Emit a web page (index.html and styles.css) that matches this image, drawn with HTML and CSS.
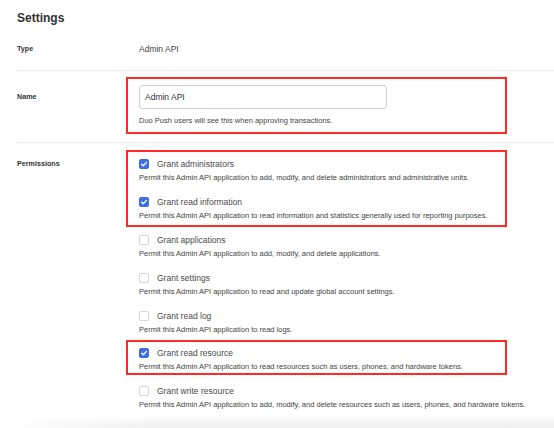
FILE: index.html
```html
<!DOCTYPE html>
<html>
<head>
<meta charset="utf-8">
<link rel="stylesheet" href="styles.css">
</head>
<body>
<div class="page">
  <h1 class="title">Settings</h1>

  <div class="row row-type">
    <div class="label">Type</div>
    <div class="value-text">Admin API</div>
  </div>

  <div class="row row-name">
    <div class="label label-name">Name</div>
    <div class="col">
      <div class="group hl group-name">
        <div class="input">Admin API</div>
        <div class="desc desc-name">Duo Push users will see this when approving transactions.</div>
      </div>
    </div>
  </div>

  <div class="row row-perm">
    <div class="label label-perm">Permissions</div>
    <div class="col">
      <div class="group hl g1">
        <div class="item">
          <div class="check-line"><span class="cb on"><svg viewBox="0 0 10 10" width="10" height="10"><path d="M2.6 5.2 L4.3 6.8 L7.5 3.4" fill="none" stroke="#fff" stroke-width="1.3" stroke-linecap="round" stroke-linejoin="round"/></svg></span><span class="cl">Grant administrators</span></div>
          <div class="desc">Permit this Admin API application to add, modify, and delete administrators and administrative units.</div>
        </div>
        <div class="item">
          <div class="check-line"><span class="cb on"><svg viewBox="0 0 10 10" width="10" height="10"><path d="M2.6 5.2 L4.3 6.8 L7.5 3.4" fill="none" stroke="#fff" stroke-width="1.3" stroke-linecap="round" stroke-linejoin="round"/></svg></span><span class="cl">Grant read information</span></div>
          <div class="desc">Permit this Admin API application to read information and statistics generally used for reporting purposes.</div>
        </div>
      </div>
      <div class="group g2">
        <div class="item">
          <div class="check-line"><span class="cb"></span><span class="cl">Grant applications</span></div>
          <div class="desc">Permit this Admin API application to add, modify, and delete applications.</div>
        </div>
        <div class="item">
          <div class="check-line"><span class="cb"></span><span class="cl">Grant settings</span></div>
          <div class="desc">Permit this Admin API application to read and update global account settings.</div>
        </div>
        <div class="item">
          <div class="check-line"><span class="cb"></span><span class="cl">Grant read log</span></div>
          <div class="desc">Permit this Admin API application to read logs.</div>
        </div>
      </div>
      <div class="group hl g3">
        <div class="item">
          <div class="check-line"><span class="cb on"><svg viewBox="0 0 10 10" width="10" height="10"><path d="M2.6 5.2 L4.3 6.8 L7.5 3.4" fill="none" stroke="#fff" stroke-width="1.3" stroke-linecap="round" stroke-linejoin="round"/></svg></span><span class="cl">Grant read resource</span></div>
          <div class="desc">Permit this Admin API application to read resources such as users, phones, and hardware tokens.</div>
        </div>
      </div>
      <div class="group g4">
        <div class="item">
          <div class="check-line"><span class="cb"></span><span class="cl">Grant write resource</span></div>
          <div class="desc">Permit this Admin API application to add, modify, and delete resources such as users, phones, and hardware tokens.</div>
        </div>
      </div>
    </div>
  </div>
  <div class="fade"></div>
</div>
</body>
</html>
```

FILE: styles.css
```css
* { box-sizing: border-box; }
html, body { margin: 0; padding: 0; background: #fff; }
body {
  font-family: "Liberation Sans", Arial, Helvetica, sans-serif;
  color: #333;
  width: 554px;
  height: 428px;
  overflow: hidden;
}
.page {
  padding-left: 17px;
  padding-top: 11px;
  height: 428px;
  display: flex;
  flex-direction: column;
}
.title {
  margin: 0;
  font-size: 12px;
  line-height: 14px;
  font-weight: bold;
  color: #333;
}
.row {
  display: flex;
}
.label {
  width: 109px;
  flex: none;
  font-size: 7.2px;
  font-weight: bold;
  color: #333;
  line-height: 12px;
}
.row-type {
  margin-top: 18px;
  padding-bottom: 15px;
  align-items: center;
}
.value-text {
  margin-left: 13px;
  font-size: 8.5px;
  line-height: 12px;
  color: #444;
}
.row-name {
  border-top: 1px solid #eeeeee;
  padding-top: 6px;
  padding-bottom: 8px;
}
.label-name { padding-top: 14px; }
.label-perm { padding-top: 8px; }
.col {
  width: 381px;
  display: flex;
  flex-direction: column;
}
.group {
  border: 2px solid transparent;
  padding: 0 11px;
  display: flex;
  flex-direction: column;
  gap: 13px;
}
.group.hl { border-color: #ff2a22; }
.group-name { padding: 6px 11px 6px; gap: 0; }
.input {
  width: 248px;
  height: 24px;
  border: 1px solid #cfcfcf;
  border-radius: 3px;
  padding-left: 5px;
  font-size: 8.5px;
  line-height: 22px;
  color: #333;
}
.desc {
  font-size: 7.5px;
  line-height: 10px;
  color: #444;
  white-space: nowrap;
  margin-top: 3px;
}
.desc-name { margin-top: 7px; }
.row-perm {
  border-top: 1px solid #eeeeee;
  padding-top: 7px;
}
.g1 { padding: 6px 11px 4px; }
.g2 { padding: 5px 11px 3px; }
.g3 { padding: 5px 11px 1px; }
.g4 { padding: 8px 11px 0; }
.check-line {
  display: flex;
  align-items: center;
  height: 12px;
}
.cb {
  width: 10px;
  height: 10px;
  border: 1px solid #d4d4d4;
  border-radius: 2px;
  background: #fff;
  margin-right: 8px;
  flex: none;
  display: flex;
}
.cb.on {
  background: #3f6ee0;
  border-color: #3f6ee0;
}
.cb svg { margin: -1px; }
.cl {
  font-size: 8.5px;
  color: #4a4a4a;
  line-height: 12px;
}
.fade {
  margin-top: auto;
  margin-left: -17px;
  height: 14px;
  background:
    linear-gradient(to right, #fff 0, rgba(255,255,255,0) 30%),
    linear-gradient(to bottom, #fff, #eeeeee);
}
```
